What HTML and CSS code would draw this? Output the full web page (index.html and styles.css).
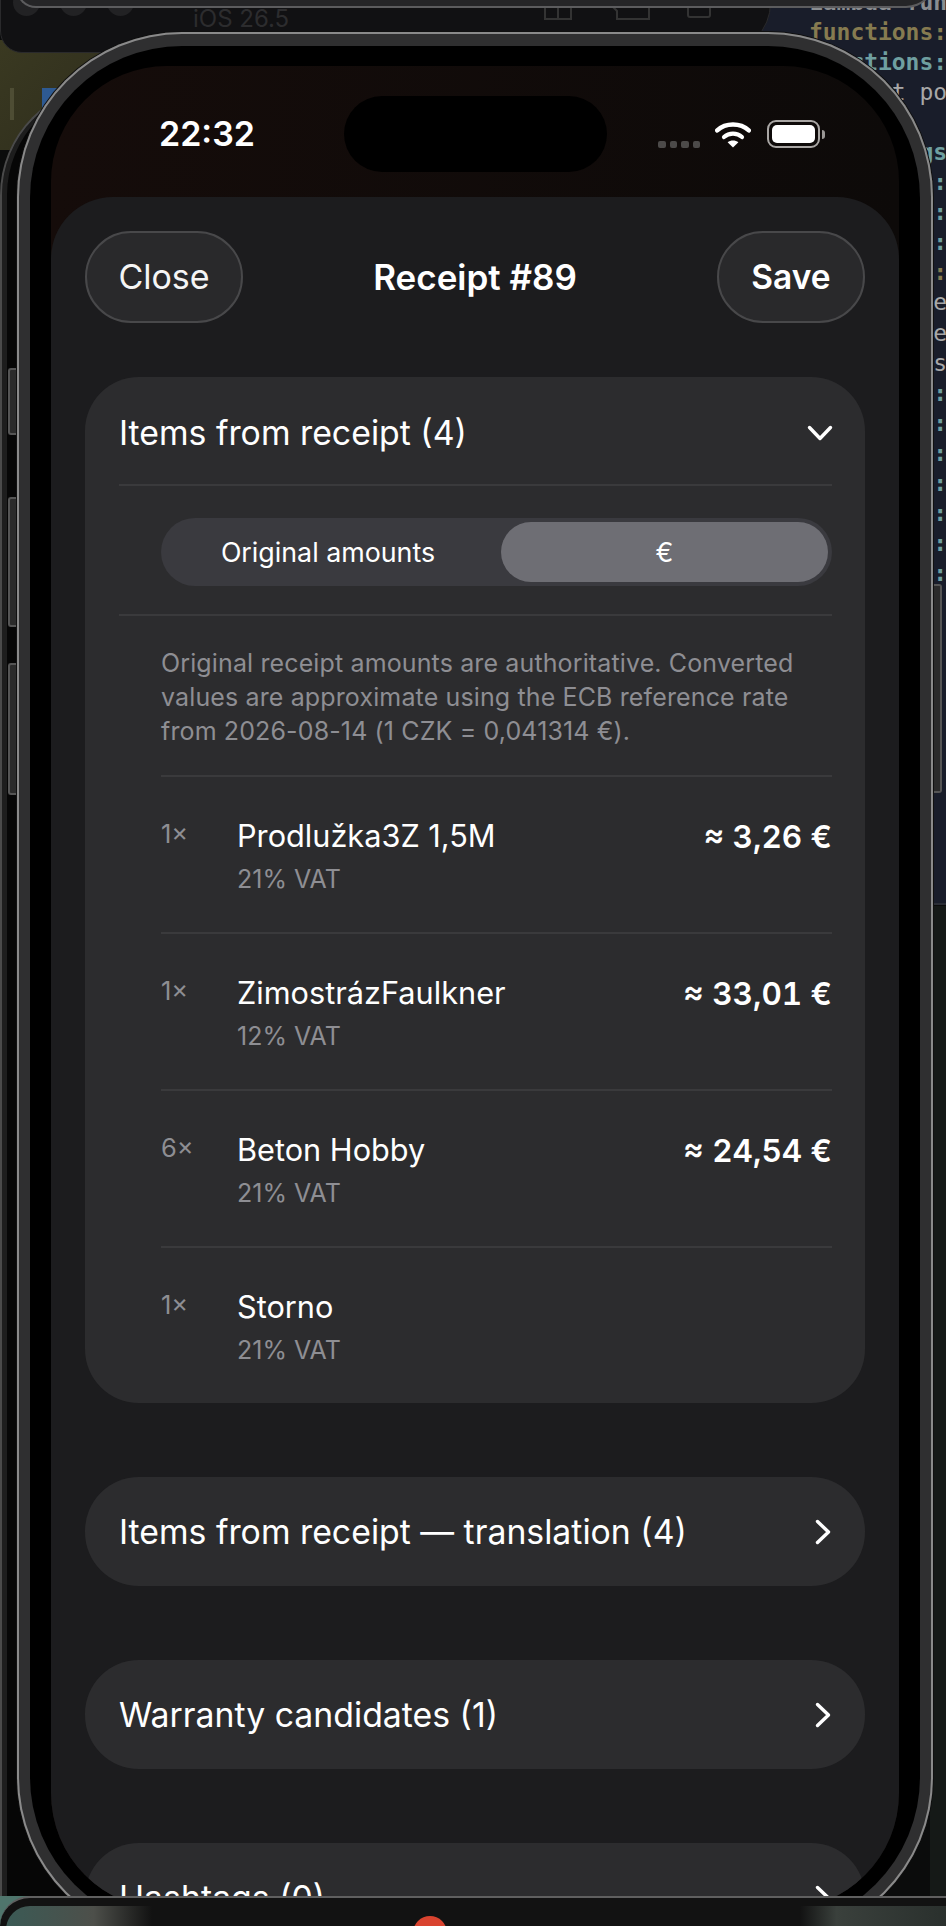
FILE: index.html
```html
<!DOCTYPE html>
<html lang="en">
<head>
<meta charset="utf-8">
<title>Receipt #89</title>
<link rel="stylesheet" href="styles.css">
</head>
<body>
<div class="desktop">
  <pre class="code"><span class="c-dim">Lambda func</span>
<span class="c-gold">functions:</span>
<span class="c-teal">  actions:</span>
<span class="c-grey">      t po</span>

<span class="c-teal">  mappings</span>
<span class="c-teal">         :</span>
<span class="c-teal">         :</span>
<span class="c-teal">         :</span>
<span class="c-gold">         :</span>
<span class="c-grey">         e</span>
<span class="c-grey">         e</span>
<span class="c-grey">         s</span>
<span class="c-teal">         :</span>
<span class="c-teal">         :</span>
<span class="c-teal">         :</span>
<span class="c-teal">         :</span>
<span class="c-teal">         :</span>
<span class="c-teal">         :</span>
<span class="c-teal">         :</span>











<span class="c-grey">         e</span>
<span class="c-grey">         M</span></pre>
  <div class="code-end"></div>

  <div class="olive"><i class="olive-bar"></i><i class="olive-tab"></i></div>
  <div class="back-phone"></div>

  <div class="sim-bar">
    <div class="sim-top"></div>
    <div class="sim-dots"><i></i><i></i><i></i></div>
    <span class="sim-label">iOS 26.5</span>
    <div class="sim-icons">
      <svg width="30" height="20" viewBox="0 0 30 20"><path d="M2 0v18h26V0M15 0v18" fill="none" stroke="#333" stroke-width="2"/></svg>
      <svg width="42" height="20" viewBox="0 0 42 20"><path d="M2 4l6 6v8h32V0M21 0a7 7 0 0 0 12 0" fill="none" stroke="#333" stroke-width="2"/></svg>
      <svg width="24" height="20" viewBox="0 0 24 20"><path d="M1 0v14a2 2 0 0 0 2 2h18a2 2 0 0 0 2-2V0" fill="none" stroke="#333" stroke-width="2"/></svg>
    </div>
  </div>

  <i class="side side-a"></i>
  <i class="side side-b"></i>
  <i class="side side-c"></i>
  <i class="side side-d"></i>

  <div class="phone">
    <div class="bezel">
      <div class="screen">
        <div class="status">
          <span class="time">22:32</span>
          <div class="island"></div>
          <div class="status-right">
            <div class="signal"><i></i><i></i><i></i><i></i></div>
            <svg class="wifi" width="36" height="27" viewBox="0 0 36 27">
              <path d="M2.2 9.4C10.8 1.6 25.2 1.6 33.8 9.4" fill="none" stroke="#fff" stroke-width="4.4" stroke-linecap="round"/>
              <path d="M9 16C14 11.6 22 11.6 27 16" fill="none" stroke="#fff" stroke-width="4.2" stroke-linecap="round"/>
              <path d="M12.6 21.2C15.6 18.8 20.4 18.8 23.4 21.2L18 26.6Z" fill="#fff"/>
            </svg>
            <div class="battery"><div class="battery-body"><i></i></div><i class="battery-nub"></i></div>
          </div>
        </div>

        <div class="sheet">
          <header class="sheet-head">
            <button class="glass glass-close">Close</button>
            <h1 class="sheet-title">Receipt #89</h1>
            <button class="glass glass-save">Save</button>
          </header>

          <section class="card">
            <div class="card-head">
              <span>Items from receipt (4)</span>
              <svg class="chev-down" width="26" height="16" viewBox="0 0 26 16"><path d="M2.5 2.5L13 13.5L23.5 2.5" fill="none" stroke="#fff" stroke-width="3.4" stroke-linecap="round" stroke-linejoin="round"/></svg>
            </div>
            <div class="toggle-wrap">
              <div class="toggle">
                <span class="toggle-opt toggle-off">Original amounts</span>
                <span class="toggle-opt toggle-on">€</span>
              </div>
            </div>
            <div class="card-body">
              <p class="note">Original receipt amounts are authoritative. Converted values are approximate using the ECB reference rate from 2026-08-14 (1 CZK = 0,041314 €).</p>
              <div class="row">
                <span class="qty">1×</span>
                <div class="desc"><div class="name">Prodlužka3Z 1,5M</div><div class="vat">21% VAT</div></div>
                <span class="price">≈ 3,26 €</span>
              </div>
              <div class="row">
                <span class="qty">1×</span>
                <div class="desc"><div class="name">ZimostrázFaulkner</div><div class="vat">12% VAT</div></div>
                <span class="price">≈ 33,01 €</span>
              </div>
              <div class="row">
                <span class="qty">6×</span>
                <div class="desc"><div class="name">Beton Hobby</div><div class="vat">21% VAT</div></div>
                <span class="price">≈ 24,54 €</span>
              </div>
              <div class="row">
                <span class="qty">1×</span>
                <div class="desc"><div class="name">Storno</div><div class="vat">21% VAT</div></div>
              </div>
            </div>
          </section>

          <div class="pill"><span>Items from receipt — translation (4)</span><svg width="16" height="26" viewBox="0 0 16 26"><path d="M2.5 2.5L13.5 13L2.5 23.5" fill="none" stroke="#fff" stroke-width="3.4" stroke-linecap="round" stroke-linejoin="round"/></svg></div>
          <div class="pill"><span>Warranty candidates (1)</span><svg width="16" height="26" viewBox="0 0 16 26"><path d="M2.5 2.5L13.5 13L2.5 23.5" fill="none" stroke="#fff" stroke-width="3.4" stroke-linecap="round" stroke-linejoin="round"/></svg></div>
          <div class="pill"><span>Hashtags (0)</span><svg width="16" height="26" viewBox="0 0 16 26"><path d="M2.5 2.5L13.5 13L2.5 23.5" fill="none" stroke="#fff" stroke-width="3.4" stroke-linecap="round" stroke-linejoin="round"/></svg></div>
        </div>
      </div>
    </div>
  </div>

  <i class="dock-corner"></i>
  <div class="dock">
    <div class="dock-left"></div>
    <div class="dock-right"></div>
    <i class="dock-red"></i>
  </div>
</div>
</body>
</html>
```
FILE: styles.css
```css
* { box-sizing: border-box; }
html, body { margin: 0; padding: 0; background: #0b0c0c; }
i { display: block; }

.desktop {
  position: relative;
  width: 946px;
  height: 1926px;
  overflow: hidden;
  background: #0b0c0c;
  font-family: "Inter", "Liberation Sans", sans-serif;
  color: #fff;
}

/* Windows behind the phone */
.code {
  position: absolute;
  left: 686px;
  top: -13px;
  width: 260px;
  height: 918px;
  margin: 0;
  padding: 0 0 0 123px;
  overflow: hidden;
  background: #191d2a;
  border-bottom: 2px solid #2b2e36;
  font: 700 23px/30.05px "DejaVu Sans Mono", monospace;
  letter-spacing: -0.05px;
}
.c-gold { color: #867b50; }
.c-teal { color: #6f9fa0; }
.c-grey { color: #a8a8a8; font-weight: 400; }
.c-dim { color: #8a8d90; }
.code-end {
  position: absolute;
  left: 930px;
  top: 906px;
  width: 16px;
  height: 990px;
  background: #151917;
}
.olive {
  position: absolute;
  left: 0;
  top: 40px;
  width: 150px;
  height: 110px;
  background: linear-gradient(135deg, #3a3921, #2c2b1c);
}
.olive-bar {
  position: absolute;
  left: 10px;
  top: 48px;
  width: 4px;
  height: 32px;
  background: #4e4d34;
}
.olive-tab {
  position: absolute;
  left: 42px;
  top: 48px;
  width: 20px;
  height: 24px;
  background: #2e5a92;
}
.back-phone {
  position: absolute;
  left: 0;
  top: 85px;
  width: 300px;
  height: 1815px;
  border: 2px solid #4a4a4a;
  border-right: 0;
  border-radius: 110px 0 0 0;
  background: #060606;
  box-shadow: inset 5px 0 0 #1d1d1d;
}
.sim-bar {
  position: absolute;
  left: 0;
  top: -40px;
  width: 771px;
  height: 93px;
  background: #111113;
  border: 1px solid #2a2a2c;
  border-radius: 0 0 50px 22px;
}
.sim-top {
  position: absolute;
  left: 15px;
  top: 0;
  width: 920px;
  height: 47px;
  background: #252527;
  border: 2px solid #5c5c5e;
  border-top: 0;
  border-radius: 0 0 30px 20px;
  z-index: 1;
}
.sim-dots {
  position: absolute;
  left: 12px;
  top: 28px;
  display: flex;
  gap: 20px;
}
.sim-dots i {
  width: 27px;
  height: 27px;
  border-radius: 50%;
  background: #222224;
}
.sim-label {
  position: absolute;
  left: 192px;
  top: 43px;
  font-size: 24px;
  line-height: 30px;
  color: #2c2c2e;
}
.sim-icons {
  position: absolute;
  left: 542px;
  top: 40px;
  display: flex;
  align-items: flex-start;
  gap: 36px;
}

/* Hardware buttons */
.side {
  position: absolute;
  left: 8px;
  width: 10px;
  background: #2b2b2b;
  border: 2px solid #555;
  border-right: 0;
  border-radius: 3px 0 0 3px;
}
.side-a { top: 368px; height: 67px; }
.side-b { top: 497px; height: 130px; }
.side-c { top: 663px; height: 132px; }
.side-d { left: 932px; top: 584px; height: 209px; border-right: 2px solid #555; border-left: 0; border-radius: 0 3px 3px 0; }

/* Phone */
.phone {
  position: absolute;
  left: 17px;
  top: 32px;
  width: 916px;
  height: 1910px;
  padding: 14px 13px 13px;
  background: #2f2f30;
  border-radius: 165px;
  box-shadow: inset 0 0 0 2px #8a8a8a, 0 0 0 1px #101010;
}
.bezel {
  height: 100%;
  padding: 20px 21px;
  background: #000;
  border-radius: 152px;
}
.screen {
  height: 100%;
  overflow: hidden;
  background: linear-gradient(90deg, #150c0a, #0d0a09);
  border-radius: 116px;
}

/* Status bar */
.status {
  display: grid;
  grid-template-columns: 1fr 263px 1fr;
  align-items: center;
  height: 131px;
  padding-top: 30px;
  padding-bottom: 25px;
}
.time {
  padding-left: 108px;
  font-size: 34px;
  font-weight: 600;
  line-height: 40px;
}
.island {
  height: 76px;
  background: #000;
  border-radius: 38px;
}
.status-right {
  display: flex;
  align-items: center;
  justify-content: flex-end;
  padding-right: 74px;
}
.signal {
  display: flex;
  gap: 4px;
  margin-top: 21px;
  margin-right: 15px;
}
.signal i {
  width: 7.5px;
  height: 7.5px;
  border-radius: 2px;
  background: #4c4a49;
}
.wifi { margin-right: 16px; }
.battery {
  display: flex;
  align-items: center;
  gap: 2px;
}
.battery-body {
  width: 53px;
  height: 28px;
  padding: 3px;
  border: 2px solid #a9a6a4;
  border-radius: 9px;
}
.battery-body i {
  width: 100%;
  height: 100%;
  background: #fff;
  border-radius: 5px;
}
.battery-nub {
  width: 3px;
  height: 9px;
  background: #9a9795;
  border-radius: 0 3px 3px 0;
}

/* Sheet */
.sheet {
  height: 1740px;
  padding: 34px 34px 0;
  background: #1c1c1e;
  border-radius: 62px 62px 0 0;
}
.sheet-head {
  display: grid;
  grid-template-columns: 158px 1fr 158px;
  align-items: center;
  height: 92px;
  margin-bottom: 54px;
}
.glass {
  height: 92px;
  padding: 0;
  background: #29292b;
  border: 2px solid #48484a;
  border-radius: 46px;
  color: #f5f5f5;
  font: 400 34px/40px "Inter", sans-serif;
}
.glass-save {
  justify-self: end;
  width: 148px;
  font-size: 33.5px;
  font-weight: 600;
  color: #fff;
}
.sheet-title {
  margin: 0;
  text-align: center;
  font-size: 35px;
  font-weight: 600;
  line-height: 40px;
}

/* Card */
.card {
  height: 1026px;
  margin-bottom: 74px;
  padding: 0 33px 0 34px;
  background: #2c2c2e;
  border-radius: 54px;
}
.card-head, .pill {
  display: flex;
  align-items: center;
  justify-content: space-between;
  font-size: 33.8px;
  line-height: 40px;
}
.card-head {
  height: 109px;
  padding-top: 4px;
  border-bottom: 2px solid #3a3a3c;
}
.chev-down { margin-right: -1px; }
.toggle-wrap {
  padding: 32px 0 28px 42px;
  border-bottom: 2px solid #3a3a3c;
}
.toggle {
  display: grid;
  grid-template-columns: 1fr 327px;
  align-items: stretch;
  height: 68px;
  padding: 4px 4px 4px 0;
  background: #3a3a3f;
  border-radius: 34px;
}
.toggle-opt {
  display: flex;
  align-items: center;
  justify-content: center;
  font-size: 26.8px;
  font-weight: 400;
  line-height: 30px;
}
.toggle-off { padding-right: 6px; }
.toggle-on {
  background: #6e6e74;
  border-radius: 30px;
}
.card-body { padding-left: 42px; }
.note {
  margin: 0;
  padding: 30px 0 26px;
  border-bottom: 2px solid #3a3a3c;
  color: #8e8e93;
  font-size: 25px;
  letter-spacing: 0.13px;
  line-height: 34.2px;
}

/* Rows */
.row {
  display: flex;
  align-items: flex-start;
  height: 157px;
  padding-top: 39px;
  border-bottom: 2px solid #3a3a3c;
}
.row:last-child { border-bottom: 0; }
.qty {
  width: 76px;
  margin-top: 3px;
  color: #8e8e93;
  font-size: 25.5px;
  line-height: 30px;
}
.desc { flex: 1; }
.name {
  font-size: 30.7px;
  line-height: 40px;
}
.vat {
  margin-top: 8px;
  color: #8e8e93;
  font-size: 25px;
  line-height: 30px;
}
.price {
  margin-top: 1px;
  font-size: 31.5px;
  font-weight: 600;
  font-feature-settings: "tnum";
  line-height: 40px;
}

/* Pills */
.pill {
  height: 109px;
  margin-bottom: 74px;
  padding: 0 34px 0 34px;
  background: #2c2c2e;
  border-radius: 54px;
}

/* Dock */
.dock-corner {
  position: absolute;
  left: 0;
  top: 1896px;
  width: 32px;
  height: 30px;
  background: #4f756c;
}
.dock {
  position: absolute;
  left: 0;
  top: 1896px;
  width: 946px;
  height: 30px;
  background: #121212;
  border-top: 2px solid #5f5f5f;
  border-radius: 30px 0 0 0;
}
.dock-left {
  position: absolute;
  left: 6px;
  top: 8px;
  width: 146px;
  height: 24px;
  border-radius: 24px 0 0 0;
  background: linear-gradient(90deg, #3b5a55, #4d4f4a 60%, #121212);
}
.dock-right {
  position: absolute;
  right: 0;
  top: 8px;
  width: 146px;
  height: 24px;
  background: linear-gradient(90deg, #121212, #3a403c 25%, #2a302d);
}
.dock-red {
  position: absolute;
  left: 413px;
  top: 18px;
  width: 34px;
  height: 34px;
  border-radius: 50%;
  background: #d9432f;
}
```
